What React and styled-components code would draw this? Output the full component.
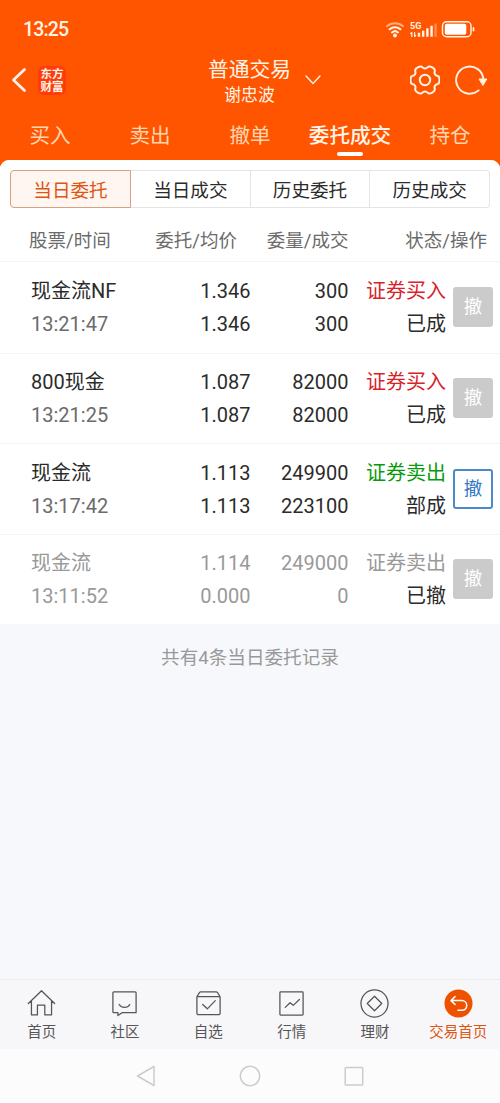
import styled, { createGlobalStyle } from 'styled-components';

const GlobalStyle = createGlobalStyle`
  * {
    box-sizing: border-box;
  }

  body {
    margin: 0;
    background: #f7f8fb;
    font-family: Roboto, "Noto Sans CJK SC", sans-serif;
    color: #2b2b2b;
  }

  button {
    font-family: inherit;
    padding: 0;
    border: 0;
    background: none;
  }

  svg {
    display: block;
    fill: none;
    stroke: currentColor;
    stroke-linecap: round;
    stroke-linejoin: round;
  }
`;

const Screen = styled.div`
  width: 500px;
  height: 1103px;
  display: flex;
  flex-direction: column;
  overflow: hidden;
  background: #ff5500;
`;

const StatusBar = styled.div`
  height: 58px;
  padding: 1px 24px 0 23px;
  display: flex;
  align-items: center;
  justify-content: space-between;
  color: #fff4e6;
`;

const Clock = styled.span`
  font-size: 19.5px;
  font-weight: 500;
  letter-spacing: -0.85px;
`;

const Header = styled.header`
  height: 52px;
  padding: 0 13px 0 11px;
  display: grid;
  grid-template-columns: 120px 1fr 120px;
  color: #fff4e6;
`;

const HeaderSide = styled.div`
  height: 44px;
  display: flex;
  align-items: center;
  justify-content: ${({ $end }) => ($end ? 'flex-end' : 'flex-start')};
  gap: ${({ $end }) => ($end ? '15px' : '11px')};
`;

const Logo = styled.div`
  width: 28px;
  height: 29px;
  border-radius: 6px;
  background: #ff3b0c;
  display: flex;
  flex-direction: column;
  align-items: center;
  justify-content: center;
  white-space: pre-line;
  font: 700 11.5px/13px "Noto Sans CJK SC", sans-serif;
`;

const Account = styled.div`
  display: flex;
  justify-content: center;
  gap: 14px;
  padding: 1px 0 0 31px;
`;

const AccountText = styled.div`
  text-align: center;
`;

const AccountType = styled.div`
  font-size: 20.8px;
  line-height: 22px;
`;

const AccountName = styled.div`
  margin-top: 4px;
  font-size: 16.8px;
  line-height: 20px;
`;

const Arrow = styled.div`
  padding-top: 16px;
`;

const Tabs = styled.nav`
  height: 50px;
  display: grid;
  grid-template-columns: repeat(5, 1fr);
`;

const Tab = styled.button`
  display: flex;
  flex-direction: column;
  align-items: center;
  padding-top: 11px;
  font-size: 20.6px;
  line-height: 31px;
  white-space: nowrap;
  color: ${({ $active }) => ($active ? '#fff4e6' : '#ffd5b0')};
  font-weight: ${({ $active }) => ($active ? 500 : 400)};

  &::after {
    content: '';
    width: 26px;
    height: 4px;
    border-radius: 2px;
    background: ${({ $active }) => ($active ? '#fff' : 'transparent')};
  }
`;

const Sheet = styled.main`
  flex: 1;
  border-radius: 9px 9px 0 0;
  background: #f7f8fb;
  overflow: hidden;
`;

const Panel = styled.section`
  background: #fff;
`;

const Segments = styled.div`
  padding: 10px 10px 0;
  display: grid;
  grid-template-columns: 121px repeat(3, 1fr);
`;

const Segment = styled.button`
  height: 38px;
  padding-bottom: 2px;
  font-size: 18.6px;
  color: ${({ $active }) => ($active ? '#dd5510' : '#2b2b2b')};
  background: ${({ $active }) => ($active ? '#fff5f1' : '#fff')};
  border: 1px solid ${({ $active }) => ($active ? '#d4a183' : '#e4e4e4')};

  &:not(:first-child) {
    border-left: 0;
  }

  &:first-child {
    border-radius: 4px 0 0 4px;
  }

  &:last-child {
    border-radius: 0 4px 4px 0;
  }
`;

const TableHead = styled.div`
  height: 54px;
  padding: 9px 13px 0 29px;
  display: grid;
  grid-template-columns: 107px 101px 111.5px 1fr;
  align-items: center;
  border-bottom: 1px solid #f3f3f5;
  font-size: 18.5px;
  color: #6b6b6b;
  text-align: right;

  span:first-child {
    text-align: left;
  }
`;

const Row = styled.div`
  display: grid;
  grid-template-columns: 119px 100.5px 98px 97.5px 39.5px;
  height: 90.6px;
  padding: 13px 0 0 31px;
  font-size: 20px;
  line-height: 33px;
  color: ${({ $muted }) => ($muted ? '#999' : '#2b2b2b')};
  text-align: right;

  & + & {
    padding-top: 12.4px;
    border-top: 1px solid #f3f3f5;
  }
`;

const Cell = styled.div`
  white-space: nowrap;
  text-align: ${({ $left }) => ($left ? 'left' : 'right')};
`;

const Time = styled.div`
  color: ${({ $muted }) => ($muted ? '#999' : '#6b6b6b')};
`;

const sideColors = { buy: '#d9232b', sell: '#089a0c', off: '#999' };

const Side = styled.div`
  color: ${({ $kind }) => sideColors[$kind]};
`;

const State = styled.div`
  color: #2b2b2b;
`;

const CancelButton = styled.button`
  width: 40px;
  height: 40px;
  margin: 12px 0 0 7px;
  border-radius: 3px;
  font-size: 18.5px;
  line-height: 36px;
  color: ${({ $enabled }) => ($enabled ? '#2f78c4' : '#fff')};
  background: ${({ $enabled }) => ($enabled ? '#fff' : '#cbcbcb')};
  border: 2px solid ${({ $enabled }) => ($enabled ? '#4a8acb' : '#cbcbcb')};
`;

const Summary = styled.p`
  margin: 0;
  padding-top: 20px;
  font-size: 18.6px;
  line-height: 28px;
  text-align: center;
  color: #999;
`;

const BottomNav = styled.nav`
  height: 70px;
  padding-top: 9px;
  display: grid;
  grid-template-columns: repeat(6, 1fr);
  background: #f7f7fa;
  border-top: 1px solid #ebebed;
`;

const NavItem = styled.button`
  display: flex;
  flex-direction: column;
  align-items: center;
  gap: 5px;
  font-size: 14.5px;
  line-height: 20px;
  color: ${({ $active }) => ($active ? '#dd5510' : '#555')};
`;

const SystemNav = styled.div`
  height: 54px;
  display: flex;
  align-items: center;
  justify-content: center;
  gap: 80px;
  background: #fcfcfc;
  color: #ccc;
`;

const tabs = ['买入', '卖出', '撤单', '委托成交', '持仓'];
const segments = ['当日委托', '当日成交', '历史委托', '历史成交'];
const heads = ['股票/时间', '委托/均价', '委量/成交', '状态/操作'];

const orders = [
  { name: '现金流NF', time: '13:21:47', price: '1.346', avg: '1.346', qty: '300', filled: '300', side: '证券买入', kind: 'buy', state: '已成' },
  { name: '800现金', time: '13:21:25', price: '1.087', avg: '1.087', qty: '82000', filled: '82000', side: '证券买入', kind: 'buy', state: '已成' },
  { name: '现金流', time: '13:17:42', price: '1.113', avg: '1.113', qty: '249900', filled: '223100', side: '证券卖出', kind: 'sell', state: '部成', open: true },
  { name: '现金流', time: '13:11:52', price: '1.114', avg: '0.000', qty: '249000', filled: '0', side: '证券卖出', kind: 'off', state: '已撤', muted: true },
];

// Six rounded lobes, smoothed through the midpoints of the control points
const gearPath = () => {
  const pts = [];
  for (let i = 0; i < 6; i++) {
    [[-14, 15], [14, 15], [22, 11.6], [38, 11.6]].forEach(([deg, r]) => {
      const a = ((i * 60 + deg) * Math.PI) / 180;
      pts.push([15 + r * Math.cos(a), 15 + r * Math.sin(a)]);
    });
  }
  const mid = (p, q) => `${(p[0] + q[0]) / 2} ${(p[1] + q[1]) / 2}`;
  const start = mid(pts[pts.length - 1], pts[0]);
  return `M${start}` + pts.map((p, i) => `Q${p[0]} ${p[1]} ${mid(p, pts[(i + 1) % pts.length])}`).join('') + 'Z';
};

const StatusIcons = () => (
  <svg width="91" height="20" viewBox="0 0 91 20">
    <g strokeWidth="2">
      <path d="M2 6.2a12 12 0 0 1 16 0" opacity=".55" />
      <path d="M4.600 9.300a8 8 0 0 1 10.800 0" />
      <path d="M7 12.400a4.600 4.600 0 0 1 6 0" />
    </g>
    <circle cx="10" cy="15.400" r="2" fill="currentColor" stroke="none" />
    <text x="25" y="9.300" fontSize="9" fontWeight="700" fill="currentColor" stroke="none">5G</text>
    <path d="M26.800 16.500v-4l-1 1M29.600 12.500v4l1-1" strokeWidth="1.200" />
    <g strokeWidth="2.400" strokeLinecap="butt">
      <path d="M34 16.800v-4M38.200 16.800v-6M42.400 16.800V8.300M46.600 16.800V5.800" />
      <path d="M50.600 16.800V3.500" opacity=".35" />
    </g>
    <rect x="57.500" y="1.700" width="28.500" height="15" rx="4" strokeWidth="1.400" />
    <rect x="59.800" y="3.700" width="21.500" height="11" rx="2" fill="#fff" stroke="none" />
    <path d="M88.500 8v2.600" strokeWidth="1.800" />
  </svg>
);

const SettingsIcon = () => (
  <svg width="30" height="30" viewBox="0 0 30 30" strokeWidth="2">
    <path d={gearPath()} />
    <circle cx="15" cy="15" r="5.2" />
  </svg>
);

const RefreshIcon = () => (
  <svg width="32" height="30" viewBox="0 0 32 30" strokeWidth="1.9">
    <path d="M23.600 25.400A13.600 13.600 0 1 1 28.300 14" />
    <path d="M24.400 14h7.400l-3.700 6.200z" fill="currentColor" strokeWidth="1" />
  </svg>
);

const navItems = [
  {
    label: '首页',
    icon: <path d="M1.400 15 15 1.800 28.600 15M4.600 12.200v14.600h6.200V16.600h7.600v10.200h7v-14.600" />,
  },
  {
    label: '社区',
    icon: (
      <>
        <path d="M4 3h22a1 1 0 0 1 1 1v20.500H12.500l-4.300 3v-3H4a1 1 0 0 1-1-1V4a1 1 0 0 1 1-1z" />
        <path d="M9.500 16c2.500 4 8.500 4 11 0" />
      </>
    ),
  },
  {
    label: '自选',
    icon: (
      <>
        <path d="M3 8v17a1.500 1.500 0 0 0 1.500 1.500h21A1.500 1.500 0 0 0 27 25V8L24.200 3.500Q23.800 3 23 3H7q-.8 0-1.200.5zM3 7.800h24" />
        <path d="m9 16 4.800 4.500 8.200-8.500" />
      </>
    ),
  },
  {
    label: '行情',
    icon: (
      <>
        <rect x="3" y="3" width="24" height="24" rx=".8" />
        <path d="m8.500 19 5-4.800 3.300 2.700 6.400-6" />
      </>
    ),
  },
  {
    label: '理财',
    icon: (
      <>
        <circle cx="15" cy="15" r="14" />
        <path d="m15 7.500 7.500 7.500-7.500 7.500L7.500 15z" />
      </>
    ),
  },
  {
    label: '交易首页',
    active: true,
    icon: (
      <>
        <circle cx="15" cy="15" r="14.500" fill="#ee5200" stroke="none" />
        <path d="M11.500 7.800 7.300 12l4.200 4M7.300 12h11.200a5 5 0 0 1 0 10h-4" stroke="#fff" strokeWidth="1.600" />
      </>
    ),
  },
];

const OrderRow = ({ order }) => (
  <Row $muted={order.muted}>
    <Cell $left>
      <div>{order.name}</div>
      <Time $muted={order.muted}>{order.time}</Time>
    </Cell>
    <Cell>
      <div>{order.price}</div>
      <div>{order.avg}</div>
    </Cell>
    <Cell>
      <div>{order.qty}</div>
      <div>{order.filled}</div>
    </Cell>
    <Cell>
      <Side $kind={order.kind}>{order.side}</Side>
      <State>{order.state}</State>
    </Cell>
    <CancelButton $enabled={order.open}>撤</CancelButton>
  </Row>
);

const App = () => {
  return (
    <Screen>
      <GlobalStyle />
      <StatusBar>
        <Clock>13:25</Clock>
        <StatusIcons />
      </StatusBar>

      <Header>
        <HeaderSide>
          <svg width="16" height="26" viewBox="0 0 16 26" strokeWidth="2.8">
            <path d="M13.500 2.500 2.500 13l11 10.500" />
          </svg>
          <Logo>{'东方\n财富'}</Logo>
        </HeaderSide>
        <Account>
          <AccountText>
            <AccountType>普通交易</AccountType>
            <AccountName>谢忠波</AccountName>
          </AccountText>
          <Arrow>
            <svg width="16" height="10" viewBox="0 0 16 10" strokeWidth="1.400">
              <path d="m1 1 7 7.500L15 1" />
            </svg>
          </Arrow>
        </Account>
        <HeaderSide $end>
          <SettingsIcon />
          <RefreshIcon />
        </HeaderSide>
      </Header>

      <Tabs>
        {tabs.map((tab) => (
          <Tab key={tab} $active={tab === '委托成交'}>{tab}</Tab>
        ))}
      </Tabs>

      <Sheet>
        <Panel>
          <Segments>
            {segments.map((item, i) => (
              <Segment key={item} $active={i === 0}>{item}</Segment>
            ))}
          </Segments>
          <TableHead>
            {heads.map((head) => (
              <span key={head}>{head}</span>
            ))}
          </TableHead>
          {orders.map((order) => (
            <OrderRow key={order.time} order={order} />
          ))}
        </Panel>
        <Summary>共有4条当日委托记录</Summary>
      </Sheet>

      <BottomNav>
        {navItems.map((item) => (
          <NavItem key={item.label} $active={item.active}>
            <svg width="29" height="29" viewBox="0 0 30 30" strokeWidth="1.300">{item.icon}</svg>
            {item.label}
          </NavItem>
        ))}
      </BottomNav>

      <SystemNav>
        <svg width="24" height="24" viewBox="0 0 24 24" strokeWidth="1.500">
          <path d="M20 2.500v19L3.500 12z" />
        </svg>
        <svg width="24" height="24" viewBox="0 0 24 24" strokeWidth="1.500">
          <circle cx="12" cy="12" r="9.700" />
        </svg>
        <svg width="24" height="24" viewBox="0 0 24 24" strokeWidth="1.500">
          <rect x="3.200" y="3.500" width="17.500" height="17.500" rx=".8" />
        </svg>
      </SystemNav>
    </Screen>
  );
};

export default App;
